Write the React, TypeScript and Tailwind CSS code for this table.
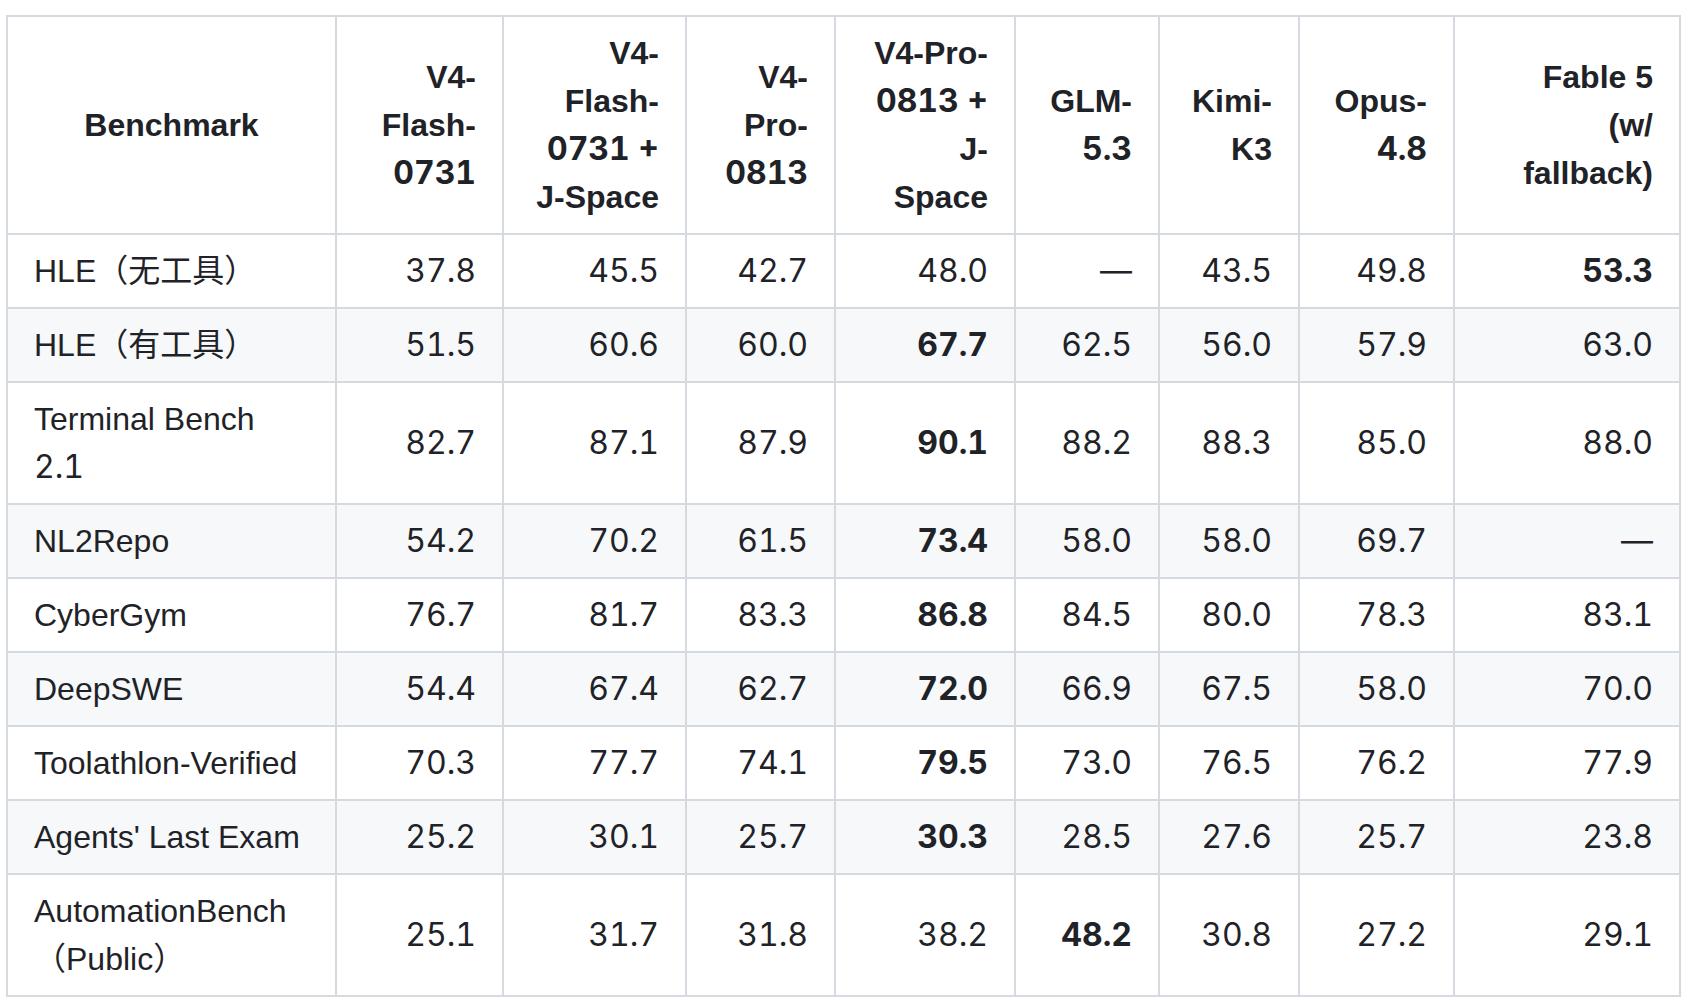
import React from 'react'

const headers: { lines: string[]; w: string }[] = [
  { lines: ['Benchmark'], w: 'w-[329px]' },
  { lines: ['V4-', 'Flash-', '0731'], w: 'w-[167px]' },
  { lines: ['V4-', 'Flash-', '0731 +', 'J-Space'], w: 'w-[183px]' },
  { lines: ['V4-', 'Pro-', '0813'], w: 'w-[149px]' },
  { lines: ['V4-Pro-', '0813 +', 'J-', 'Space'], w: 'w-[180px]' },
  { lines: ['GLM-', '5.3'], w: 'w-[144px]' },
  { lines: ['Kimi-', 'K3'], w: 'w-[140px]' },
  { lines: ['Opus-', '4.8'], w: 'w-[155px]' },
  { lines: ['Fable 5', '(w/', 'fallback)'], w: 'w-[226px]' },
]

// a value wrapped in * is bold
const rows: { name: string[]; values: string[] }[] = [
  { name: ['HLE（无工具）'], values: ['37.8', '45.5', '42.7', '48.0', '—', '43.5', '49.8', '*53.3'] },
  { name: ['HLE（有工具）'], values: ['51.5', '60.6', '60.0', '*67.7', '62.5', '56.0', '57.9', '63.0'] },
  { name: ['Terminal Bench', '2.1'], values: ['82.7', '87.1', '87.9', '*90.1', '88.2', '88.3', '85.0', '88.0'] },
  { name: ['NL2Repo'], values: ['54.2', '70.2', '61.5', '*73.4', '58.0', '58.0', '69.7', '—'] },
  { name: ['CyberGym'], values: ['76.7', '81.7', '83.3', '*86.8', '84.5', '80.0', '78.3', '83.1'] },
  { name: ['DeepSWE'], values: ['54.4', '67.4', '62.7', '*72.0', '66.9', '67.5', '58.0', '70.0'] },
  { name: ['Toolathlon-Verified'], values: ['70.3', '77.7', '74.1', '*79.5', '73.0', '76.5', '76.2', '77.9'] },
  { name: ["Agents' Last Exam"], values: ['25.2', '30.1', '25.7', '*30.3', '28.5', '27.6', '25.7', '23.8'] },
  { name: ['AutomationBench', '（Public）'], values: ['25.1', '31.7', '31.8', '38.2', '*48.2', '30.8', '27.2', '29.1'] },
]

const isNum = (s: string) => /^[\d.+ ]+$/.test(s)

const Lines: React.FC<{ lines: string[] }> = ({ lines }) => (
  <>
    {lines.map((l, i) => (
      <React.Fragment key={i}>
        {i > 0 && <br />}
        {isNum(l) ? <span className="font-['Inter',sans-serif] tabular-nums">{l}</span> : l}
      </React.Fragment>
    ))}
  </>
)

const App: React.FC = () => {
  return (
    <div className="min-h-screen bg-white pt-[15px] pl-[6px] text-[#1f2328] text-[32px] leading-[48px] font-['Liberation_Sans','Noto_Sans_CJK_SC',sans-serif]">
      <table className="table-fixed border-collapse w-[1673px]">
        <colgroup>
          {headers.map((h, i) => (
            <col key={i} className={h.w} />
          ))}
        </colgroup>
        <thead>
          <tr className="bg-white">
            {headers.map((h, i) => (
              <th
                key={i}
                className={`border-2 border-[#d5dae0] px-[26px] py-[12px] font-bold align-middle whitespace-nowrap ${i === 0 ? 'text-center' : 'text-right'}`}
              >
                <Lines lines={h.lines} />
              </th>
            ))}
          </tr>
        </thead>
        <tbody>
          {rows.map((r, ri) => (
            <tr key={ri} className={ri % 2 === 1 ? 'bg-[#f6f8fa]' : 'bg-white'}>
              <td className="border-2 border-[#d5dae0] px-[26px] py-[12px] text-left align-middle">
                <Lines lines={r.name} />
              </td>
              {r.values.map((v, vi) => {
                const bold = v.startsWith('*')
                return (
                  <td
                    key={vi}
                    className={`border-2 border-[#d5dae0] px-[26px] py-[12px] text-right align-middle font-['Inter',sans-serif] tabular-nums ${bold ? 'font-bold' : ''}`}
                  >
                    {bold ? v.slice(1) : v}
                  </td>
                )
              })}
            </tr>
          ))}
        </tbody>
      </table>
    </div>
  )
}

export default App
